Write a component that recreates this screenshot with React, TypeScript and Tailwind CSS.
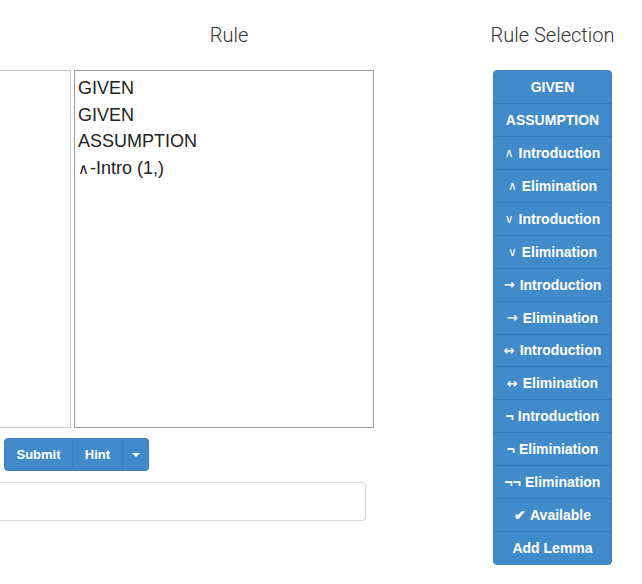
import React from 'react';

type Rule = { sym?: string; kind?: 'small' | 'arrow' | 'plain'; label: string };

const rules: Rule[] = [
  { label: 'GIVEN' },
  { label: 'ASSUMPTION' },
  { sym: '∧', kind: 'small', label: 'Introduction' },
  { sym: '∧', kind: 'small', label: 'Elimination' },
  { sym: '∨', kind: 'small', label: 'Introduction' },
  { sym: '∨', kind: 'small', label: 'Elimination' },
  { sym: '→', kind: 'arrow', label: 'Introduction' },
  { sym: '→', kind: 'arrow', label: 'Elimination' },
  { sym: '↔', kind: 'arrow', label: 'Introduction' },
  { sym: '↔', kind: 'arrow', label: 'Elimination' },
  { sym: '¬', kind: 'plain', label: 'Introduction' },
  { sym: '¬', kind: 'plain', label: 'Eliminiation' },
  { sym: '¬¬', kind: 'plain', label: 'Elimination' },
  { sym: '✔', kind: 'plain', label: 'Available' },
  { label: 'Add Lemma' },
];

const Sym = ({ r }: { r: Rule }) => {
  if (!r.sym) return null;
  if (r.kind === 'small')
    return (
      <span
        className="text-[12px] font-normal mr-[5px]"
        style={{ fontFamily: '"DejaVu Sans", sans-serif' }}
      >
        {r.sym}
      </span>
    );
  if (r.kind === 'arrow')
    return (
      <span
        className="text-[13px] font-bold mr-[5px]"
        style={{ fontFamily: '"DejaVu Sans", sans-serif' }}
      >
        {r.sym}
      </span>
    );
  return <span className="mr-[4px]">{r.sym}</span>;
};

export default function App() {
  return (
    <div
      className="w-[642px] h-[584px] bg-white overflow-hidden flex text-[#333]"
      style={{ fontFamily: '"Liberation Sans", Arial, sans-serif' }}
    >
      {/* Left: proof editor */}
      <div className="w-[378px] flex flex-col">
        <div className="h-[70px] flex items-center">
          <h2
            className="ml-[80px] w-[310px] text-center text-[20px] font-light text-[#333] pb-[1px]"
            style={{ fontFamily: 'Roboto, "Liberation Sans", sans-serif' }}
          >
            Rule
          </h2>
        </div>

        <div className="flex gap-[3px] h-[358px]">
          <div className="w-[71px] border border-l-0 border-[#c8c8c8]" />
          <div className="w-[300px] border border-[#9a9a9a] pt-[4px] pl-[3px] text-[18px] leading-[26.5px] text-[#222]">
            <div>GIVEN</div>
            <div>GIVEN</div>
            <div>ASSUMPTION</div>
            <div>
              <span
                className="text-[15px] mr-[1px]"
                style={{ fontFamily: '"DejaVu Sans", sans-serif' }}
              >
                ∧
              </span>
              -Intro (1,)
            </div>
          </div>
        </div>

        <div className="mt-[10px] ml-[4px] flex h-[33px] text-white text-[13px] font-bold">
          <button className="w-[69px] bg-[#428bca] rounded-l-[4px] border border-[#3a80c0] flex items-center justify-center">
            Submit
          </button>
          <button className="w-[50px] bg-[#428bca] border-y border-r border-[#3a80c0] flex items-center justify-center">
            Hint
          </button>
          <button className="w-[26px] bg-[#428bca] rounded-r-[4px] border-y border-r border-[#3a80c0] flex items-center justify-center">
            <span className="w-0 h-0 border-x-[4px] border-x-transparent border-t-[4px] border-t-white" />
          </button>
        </div>

        <div className="mt-[11px] w-[366px] h-[39px] border border-l-0 border-[#d6d6d6] rounded-r-[4px]" />
      </div>

      {/* Right: rule selection */}
      <div className="ml-[115px] w-[119px] flex flex-col">
        <div className="h-[70px] flex items-center justify-center">
          <h2
            className="text-[20px] font-light whitespace-nowrap text-[#333] pb-[1px]"
            style={{ fontFamily: 'Roboto, "Liberation Sans", sans-serif' }}
          >
            Rule Selection
          </h2>
        </div>
        <div className="h-[495px] flex flex-col rounded-[4px] overflow-hidden bg-[#428bca] border border-[#3a80c0]">
          {rules.map((r, i) => (
            <div
              key={i}
              className={`flex-1 flex items-center justify-center pt-[1px] text-white text-[14px] font-bold whitespace-nowrap ${
                i > 0 ? 'border-t border-[#3679b5]' : ''
              }`}
            >
              <Sym r={r} />
              {r.label}
            </div>
          ))}
        </div>
      </div>
    </div>
  );
}
